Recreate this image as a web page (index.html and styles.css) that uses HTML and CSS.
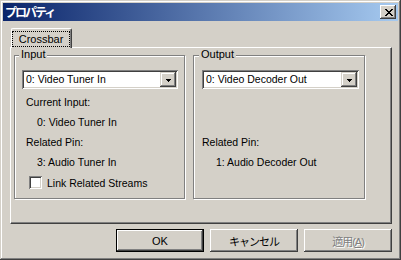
FILE: index.html
```html
<!DOCTYPE html>
<html lang="ja">
<head>
  <meta charset="UTF-8" />
  <title>プロパティ</title>
  <link rel="stylesheet" href="styles.css">
</head>
<body>
  <div class="window">
    <div class="titlebar">
      <span class="title">プロパティ</span>
      <button class="close">
        <svg width="8" height="7" viewBox="0 0 8 7" shape-rendering="crispEdges">
          <path d="M0 0h2v1h-2zM6 0h2v1h-2zM1 1h2v1h-2zM5 1h2v1h-2zM2 2h4v1h-4zM3 3h2v1h-2zM2 4h4v1h-4zM1 5h2v1h-2zM5 5h2v1h-2zM0 6h2v1h-2zM6 6h2v1h-2z" fill="#000"/>
        </svg>
      </button>
    </div>

    <div class="content">
      <div class="tabs">
        <div class="tab active"><span class="focus">Crossbar</span></div>
      </div>

      <div class="panel">
        <div class="group input">
          <div class="legend">Input</div>
          <div class="combo">
            <span class="combo-text">0: Video Tuner In</span>
            <span class="combo-btn">
              <svg width="5" height="3" viewBox="0 0 5 3" shape-rendering="crispEdges">
                <path d="M0 0h5v1h-5zM1 1h3v1h-3zM2 2h1v1h-1z" fill="#000"/>
              </svg>
            </span>
          </div>
          <div class="row label">Current Input:</div>
          <div class="row value">0: Video Tuner In</div>
          <div class="row label">Related Pin:</div>
          <div class="row value">3: Audio Tuner In</div>
          <label class="row check"><span class="box"></span>Link Related Streams</label>
        </div>

        <div class="group output">
          <div class="legend">Output</div>
          <div class="combo">
            <span class="combo-text">0: Video Decoder Out</span>
            <span class="combo-btn">
              <svg width="5" height="3" viewBox="0 0 5 3" shape-rendering="crispEdges">
                <path d="M0 0h5v1h-5zM1 1h3v1h-3zM2 2h1v1h-1z" fill="#000"/>
              </svg>
            </span>
          </div>
          <div class="row label pin">Related Pin:</div>
          <div class="row value">1: Audio Decoder Out</div>
        </div>
      </div>

      <div class="buttons">
        <button class="btn default">OK</button>
        <button class="btn jp">キャンセル</button>
        <button class="btn jp disabled">適用(<u>A</u>)</button>
      </div>
    </div>
  </div>
</body>
</html>
```

FILE: styles.css
```css
:root {
  --face: #d4d0c8;
  --light: #ffffff;
  --shadow: #808080;
  --dark: #404040;
}

* {
  box-sizing: border-box;
  margin: 0;
  padding: 0;
}

body {
  font-family: 'Liberation Sans', 'Noto Sans CJK JP', sans-serif;
  font-size: 10.5px;
  color: #000;
  background: var(--face);
}

.window {
  width: 401px;
  height: 260px;
  padding: 3px;
  background: var(--face);
  box-shadow: inset -1px -1px var(--dark), inset 1px 1px var(--face),
              inset -2px -2px var(--shadow), inset 2px 2px var(--light);
}

.titlebar {
  height: 18px;
  display: flex;
  align-items: center;
  justify-content: space-between;
  padding: 0 2px;
  background: linear-gradient(90deg, #0a246a, #a6caf0);
}

.title {
  color: #fff;
  font-family: 'Noto Sans CJK JP', sans-serif;
  font-weight: 700;
  font-size: 12px;
  letter-spacing: -2px;
  line-height: 18px;
}

.close {
  width: 16px;
  height: 14px;
  border: none;
  background: var(--face);
  display: flex;
  align-items: center;
  justify-content: center;
  padding-left: 1px;
  box-shadow: inset -1px -1px var(--dark), inset 1px 1px var(--light),
              inset -2px -2px var(--shadow), inset 2px 2px var(--face);
}

.content {
  padding: 7px 6px 0 7px;
}

.tabs {
  display: flex;
  padding-left: 1px;
  height: 20px;
  margin-bottom: -1px;
  position: relative;
}

.tab {
  width: 61px;
  height: 20px;
  background: var(--face);
  border-top: 1px solid var(--light);
  border-left: 1px solid var(--light);
  border-right: 1px solid var(--dark);
  border-top-left-radius: 2px;
  border-top-right-radius: 2px;
  box-shadow: inset -1px 0 var(--shadow);
  padding: 2px 1px 0 0;
}

.focus {
  display: block;
  height: 16px;
  line-height: 14px;
  border: 1px dotted #000;
  text-align: center;
  font-size: 11px;
}

.panel {
  height: 177px;
  display: flex;
  align-items: flex-start;
  gap: 8px;
  padding: 7px 0 0 3px;
  border-top: 1px solid var(--light);
  border-left: 1px solid var(--light);
  border-right: 1px solid var(--dark);
  border-bottom: 1px solid var(--dark);
  box-shadow: inset -1px -1px var(--shadow);
}

.group {
  height: 144px;
  border: 1px solid var(--shadow);
  box-shadow: inset 1px 1px var(--light), 1px 1px var(--light);
}

.group.input {
  width: 171px;
  padding: 0 6px;
}

.group.output {
  width: 172px;
  padding: 0 7px;
}

.legend {
  width: fit-content;
  margin: -8px 0 0 -2px;
  padding: 0 2px;
  height: 13px;
  line-height: 13px;
  font-size: 11px;
  background: var(--face);
}

.combo {
  margin: 9px 0 0 1px;
  width: 156px;
  height: 19px;
  display: flex;
  align-items: center;
  background: #fff;
  padding: 2px;
  box-shadow: inset 1px 1px var(--shadow), inset -1px -1px var(--light),
              inset 2px 2px var(--dark), inset -2px -2px var(--face);
}

.output .combo {
  width: 157px;
}

.combo-text {
  flex: 1;
  padding-left: 2px;
  line-height: 15px;
}

.combo-btn {
  width: 16px;
  height: 15px;
  display: flex;
  align-items: center;
  justify-content: center;
  padding-top: 1px;
  background: var(--face);
  box-shadow: inset -1px -1px var(--dark), inset 1px 1px var(--face),
              inset -2px -2px var(--shadow), inset 2px 2px var(--light);
}

.row {
  height: 20px;
  line-height: 20px;
}

.combo + .row {
  margin-top: 3px;
}

.input .label {
  padding-left: 5px;
}

.input .value {
  padding-left: 16px;
}

.output .label {
  padding-left: 1px;
}

.output .value {
  padding-left: 15px;
}

.row.pin {
  margin-top: 43px;
}

.check {
  display: flex;
  align-items: center;
  gap: 5px;
  padding: 1px 0 0 8px;
}

.box {
  width: 13px;
  height: 13px;
  background: #fff;
  box-shadow: inset 1px 1px var(--shadow), inset -1px -1px var(--light),
              inset 2px 2px var(--dark), inset -2px -2px var(--face);
}

.buttons {
  display: flex;
  justify-content: flex-end;
  gap: 6px;
  margin-top: 5px;
}

.btn {
  width: 88px;
  height: 23px;
  border: none;
  background: var(--face);
  font-family: 'Liberation Sans', 'Noto Sans CJK JP', sans-serif;
  font-size: 11px;
  color: #000;
  box-shadow: inset -1px -1px var(--dark), inset 1px 1px var(--light),
              inset -2px -2px var(--shadow), inset 2px 2px var(--face);
}

.btn.default {
  border: 1px solid #000;
}

.btn.jp {
  letter-spacing: -1px;
}

.btn.disabled {
  color: var(--shadow);
  text-shadow: 1px 1px var(--light);
}

.btn.disabled u {
  text-decoration-thickness: 1px;
}
```
